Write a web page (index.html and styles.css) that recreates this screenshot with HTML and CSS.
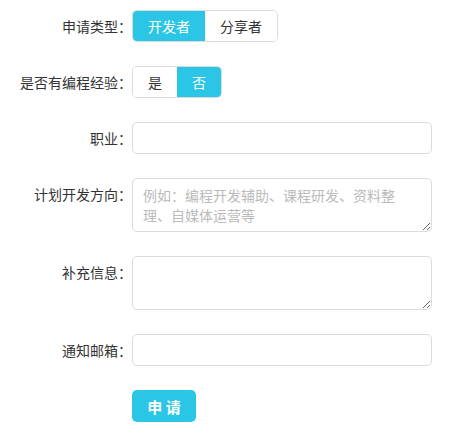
FILE: index.html
```html
<!DOCTYPE html>
<html lang="zh-CN">
<head>
<meta charset="utf-8">
<title>申请</title>
<link rel="stylesheet" href="styles.css">
</head>
<body>
<form class="form">
  <div class="row">
    <label class="label">申请类型：</label>
    <div class="seg">
      <button type="button" class="seg-btn active">开发者</button>
      <button type="button" class="seg-btn">分享者</button>
    </div>
  </div>
  <div class="row">
    <label class="label">是否有编程经验：</label>
    <div class="seg">
      <button type="button" class="seg-btn">是</button>
      <button type="button" class="seg-btn active">否</button>
    </div>
  </div>
  <div class="row">
    <label class="label">职业：</label>
    <input class="input" type="text">
  </div>
  <div class="row">
    <label class="label">计划开发方向：</label>
    <textarea class="input area" rows="2" placeholder="例如：编程开发辅助、课程研发、资料整理、自媒体运营等"></textarea>
  </div>
  <div class="row">
    <label class="label">补充信息：</label>
    <textarea class="input area" rows="2"></textarea>
  </div>
  <div class="row">
    <label class="label">通知邮箱：</label>
    <input class="input" type="email">
  </div>
  <div class="row">
    <span class="label"></span>
    <button type="button" class="submit">申 请</button>
  </div>
</form>
</body>
</html>
```
FILE: styles.css
```css
* { box-sizing: border-box; }
html, body { margin: 0; background: #fff; }
body {
  font-family: "Microsoft YaHei", "Noto Sans CJK SC", sans-serif;
  font-size: 14px;
  color: #333;
}
.form { padding-top: 10px; }
.row {
  display: flex;
  align-items: flex-start;
  margin-bottom: 24px;
}
.label {
  width: 132px;
  flex: none;
  text-align: right;
  line-height: 32px;
  white-space: nowrap;
}
.seg {
  display: flex;
  border: 1px solid #dcdcdc;
  border-radius: 5px;
  overflow: hidden;
}
.seg-btn {
  height: 30px;
  padding: 0 15px;
  border: 0;
  background: #fff;
  color: #333;
  font: inherit;
  line-height: 30px;
}
.seg-btn.active { background: #2bc6e6; color: #fff; }
.input {
  width: 300px;
  height: 32px;
  border: 1px solid #dcdcdc;
  border-radius: 5px;
  padding: 6px 10px;
  font: inherit;
  color: #333;
  outline: none;
}
.area {
  height: 54px;
  line-height: 20px;
  resize: vertical;
}
.area::placeholder { color: #bbb; }
.submit {
  width: 64px;
  height: 32px;
  border: 0;
  border-radius: 5px;
  background: #2bc6e6;
  color: #fff;
  font: inherit;
  font-weight: bold;
  font-size: 15px;
}
```
